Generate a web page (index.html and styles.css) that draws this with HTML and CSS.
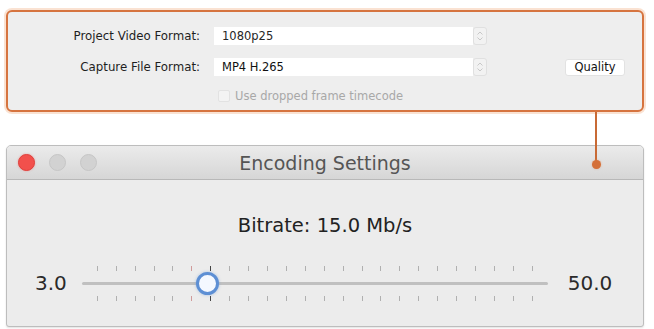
FILE: index.html
```html
<!DOCTYPE html>
<html>
<head>
<meta charset="utf-8">
<link rel="stylesheet" href="styles.css">
</head>
<body>
<div class="stage">
  <div class="panel">
    <div class="label">Project Video Format:</div>
    <div class="select">
      <div class="field">1080p25</div>
      <div class="stepper"><svg width="8" height="12" viewBox="0 0 8 12"><path d="M1.5 4.5 L4 2 L6.5 4.5 M1.5 7.5 L4 10 L6.5 7.5" fill="none" stroke="#c8c8c8" stroke-width="1"/></svg></div>
    </div>
    <div></div>
    <div class="label">Capture File Format:</div>
    <div class="select">
      <div class="field strong">MP4 H.265</div>
      <div class="stepper"><svg width="8" height="12" viewBox="0 0 8 12"><path d="M1.5 4.5 L4 2 L6.5 4.5 M1.5 7.5 L4 10 L6.5 7.5" fill="none" stroke="#c8c8c8" stroke-width="1"/></svg></div>
    </div>
    <div class="btn-cell"><div class="button">Quality</div></div>
    <div></div>
    <div class="check-row"><span class="checkbox"></span><span class="check-label">Use dropped frame timecode</span></div>
    <div></div>
  </div>

  <div class="connector"></div>
  <div class="connector-dot"></div>

  <div class="window">
    <div class="titlebar">
      <div class="lights">
        <span class="light red"></span>
        <span class="light grey"></span>
        <span class="light grey"></span>
      </div>
      <div class="title">Encoding Settings</div>
    </div>
    <div class="content">
      <div class="bitrate">Bitrate: 15.0 Mb/s</div>
      <div class="slider-row">
        <div class="end-label">3.0</div>
        <div class="slider">
          <div class="ticks">
            <i></i><i></i><i></i><i></i><i></i><i class="red"></i><i class="dark"></i><i></i><i></i><i></i><i></i><i></i><i></i><i></i><i></i><i></i><i></i><i></i><i></i><i></i><i></i><i></i><i></i><i></i>
          </div>
          <div class="track"></div>
          <div class="ticks">
            <i></i><i></i><i></i><i></i><i></i><i class="red"></i><i class="dark"></i><i></i><i></i><i></i><i></i><i></i><i></i><i></i><i></i><i></i><i></i><i></i><i></i><i></i><i></i><i></i><i></i><i></i>
          </div>
          <div class="thumb" style="left: 126px"></div>
        </div>
        <div class="end-label">50.0</div>
      </div>
    </div>
  </div>
</div>
</body>
</html>
```

FILE: styles.css
```css
* { box-sizing: border-box; }
html, body { margin: 0; padding: 0; background: #ffffff; }
body {
  font-family: "DejaVu Sans", "Liberation Sans", sans-serif;
  width: 654px;
  height: 329px;
  overflow: hidden;
}
.stage {
  position: relative;
  padding: 10px 10px 0 6px;
  display: flex;
  flex-direction: column;
}
.panel {
  width: 638px;
  height: 102px;
  border: 2px solid #d6743f;
  border-radius: 6px;
  background: #eeeeee;
  box-shadow: 0 0 0 2px rgba(245, 190, 155, 0.45);
  display: grid;
  grid-template-columns: 192px 273px 1fr;
  grid-template-rows: 18px 18px 14px;
  column-gap: 14px;
  row-gap: 13px;
  padding: 15px 17px 0 0;
  align-items: center;
}
.label {
  font-size: 11.8px;
  color: #1e1e1e;
  text-align: right;
  white-space: nowrap;
}
.select {
  display: flex;
  height: 18px;
}
.field {
  width: 259px;
  height: 18px;
  background: #ffffff;
  font-size: 11.5px;
  color: #262626;
  line-height: 18px;
  padding-left: 8px;
}
.field.strong { color: #111111; }
.stepper {
  width: 14px;
  height: 18px;
  background: #f2f2f2;
  border: 1px solid #e0e0e0;
  border-radius: 3px;
  display: flex;
  align-items: center;
  justify-content: center;
}
.btn-cell { display: flex; justify-content: flex-end; }
.button {
  width: 60px;
  height: 17px;
  background: #ffffff;
  border: 1px solid #e2e2e2;
  border-radius: 3px;
  font-size: 11.5px;
  color: #111111;
  line-height: 15px;
  text-align: center;
}
.check-row {
  display: flex;
  align-items: center;
  gap: 5px;
  padding-left: 4px;
}
.checkbox {
  width: 12px;
  height: 12px;
  border: 1px solid #e2e2e2;
  border-radius: 2px;
  background: #f3f3f3;
}
.check-label {
  font-size: 11.5px;
  color: #a8a8a8;
  white-space: nowrap;
}
.connector {
  position: absolute;
  left: 595px;
  top: 112px;
  width: 2px;
  height: 50px;
  background: #c86a35;
}
.connector-dot {
  position: absolute;
  left: 592px;
  top: 160px;
  width: 9px;
  height: 9px;
  border-radius: 50%;
  background: #d46f38;
  box-shadow: 0 0 2px rgba(230, 140, 90, 0.6);
}
.window {
  margin-top: 33px;
  width: 638px;
  height: 182px;
  border: 1px solid #bdbdbd;
  border-radius: 5px 5px 3px 3px;
  background: #ececec;
  box-shadow: 0 1px 2px rgba(0,0,0,0.12);
  display: flex;
  flex-direction: column;
  overflow: hidden;
}
.titlebar {
  height: 34px;
  flex: none;
  background: linear-gradient(#ebebeb, #d6d6d6);
  border-bottom: 1px solid #b8b8b8;
  display: grid;
  grid-template-columns: 1fr;
  align-items: center;
}
.lights, .title { grid-area: 1 / 1; }
.lights {
  display: flex;
  gap: 14px;
  padding-left: 11px;
}
.light {
  width: 17px;
  height: 17px;
  border-radius: 50%;
}
.light.red {
  background: #f2504c;
  border: 1px solid #e0403c;
  box-shadow: 0 0 2px rgba(240, 80, 76, 0.5);
}
.light.grey {
  background: #d2d2d2;
  border: 1px solid #c6c6c6;
}
.title {
  text-align: center;
  font-size: 19px;
  color: #555555;
}
.content {
  flex: 1;
  display: flex;
  flex-direction: column;
  align-items: center;
  padding-top: 35px;
}
.bitrate {
  font-size: 19.5px;
  line-height: 22px;
  color: #222222;
}
.slider-row {
  margin-top: 26px;
  align-self: stretch;
  display: flex;
  align-items: center;
  padding-left: 28px;
  height: 40px;
}
.end-label {
  font-size: 20px;
  color: #2a2a2a;
}
.slider {
  position: relative;
  width: 466px;
  height: 40px;
  margin: 0 20px 0 15px;
  display: flex;
  flex-direction: column;
  padding-top: 3px;
  gap: 11px;
}
.ticks {
  display: flex;
  justify-content: space-between;
  padding: 0 15px;
  height: 5px;
}
.ticks i {
  display: block;
  width: 1px;
  height: 5px;
  background: #b0b0b0;
}
.ticks i.red { background: #d09a9a; }
.ticks i.dark { background: #444; }
.track {
  height: 3px;
  border-radius: 2px;
  background: #c0c0c0;
}
.thumb {
  position: absolute;
  top: 9px;
  width: 23px;
  height: 23px;
  margin-left: -11.5px;
  border-radius: 50%;
  background: #f4f8ff;
  border: 3px solid #5d8fd4;
  box-shadow: 0 0 3px rgba(93, 143, 212, 0.5);
}
```
